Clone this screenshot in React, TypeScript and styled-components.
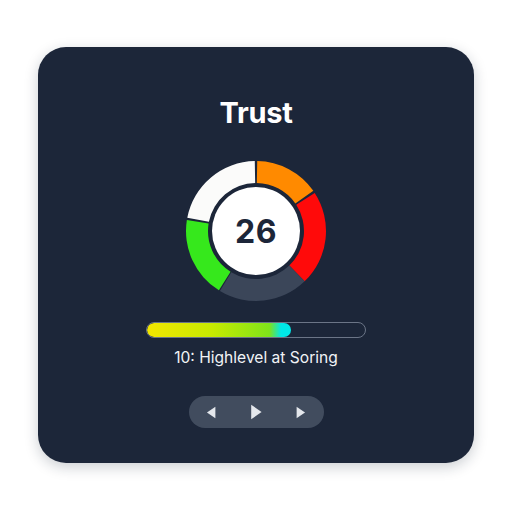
import React from "react";
import styled, { createGlobalStyle } from "styled-components";

const GlobalStyle = createGlobalStyle`
  body {
    margin: 0;
    background: #ffffff;
    font-family: Inter, "Noto Sans", sans-serif;
  }
`;

const Page = styled.div`
  display: flex;
  align-items: center;
  justify-content: center;
  width: 512px;
  height: 512px;
`;

const Card = styled.div`
  display: flex;
  flex-direction: column;
  align-items: center;
  width: 436px;
  height: 416px;
  box-sizing: border-box;
  padding-top: 48px;
  margin-top: -2px;
  border-radius: 28px;
  background: #1c2639;
  box-shadow: 0 4px 14px rgba(20, 30, 50, 0.22);
`;

const Title = styled.h1`
  margin: 0;
  font-size: 29px;
  line-height: 36px;
  font-weight: 700;
  color: #ffffff;
  letter-spacing: -0.3px;
`;

const Gauge = styled.div`
  display: grid;
  place-items: center;
  width: 142px;
  height: 142px;
  margin-top: 29px;

  & > * {
    grid-area: 1 / 1;
  }
`;

const Score = styled.span`
  font-size: 32px;
  font-weight: 700;
  color: #1c2639;
  letter-spacing: 0.5px;
`;

const Track = styled.div`
  width: 220px;
  height: 16px;
  margin-top: 20px;
  box-sizing: border-box;
  border: 1.5px solid #6b7587;
  border-radius: 8px;
  overflow: hidden;
`;

const Fill = styled.div`
  height: 100%;
  border-radius: 8px;
  background: linear-gradient(90deg, #f2e600 0%, #c8ea00 45%, #7fe31a 85%, #00e8e8 93%);
`;

const Caption = styled.p`
  margin: 11px 0 0;
  font-size: 15.6px;
  line-height: 18px;
  color: #f1f3f6;
`;

const Controls = styled.div`
  display: flex;
  align-items: center;
  justify-content: space-between;
  width: 135px;
  height: 32px;
  margin-top: 29px;
  padding: 0 14px;
  box-sizing: border-box;
  border-radius: 16px;
  background: #414c5e;
`;

const ControlButton = styled.button`
  display: flex;
  align-items: center;
  justify-content: center;
  width: 18px;
  height: 18px;
  padding: 0;
  border: none;
  background: transparent;
  cursor: pointer;
`;

const polar = (r: number, deg: number) => {
  const a = (deg * Math.PI) / 180;
  return [71 + r * Math.sin(a), 71 - r * Math.cos(a)];
};

const arc = (r0: number, r1: number, from: number, to: number) => {
  const [x0, y0] = polar(r1, from);
  const [x1, y1] = polar(r1, to);
  const [x2, y2] = polar(r0, to);
  const [x3, y3] = polar(r0, from);
  const large = to - from > 180 ? 1 : 0;
  return `M${x0} ${y0} A${r1} ${r1} 0 ${large} 1 ${x1} ${y1} L${x2} ${y2} A${r0} ${r0} 0 ${large} 0 ${x3} ${y3} Z`;
};

const segments = [
  { from: 1, to: 55, color: "#ff8a00" },
  { from: 57, to: 136, color: "#ff0a0a" },
  { from: 136, to: 211, color: "#3b4659" },
  { from: 212, to: 279, color: "#36e81c" },
  { from: 281, to: 359, color: "#fbfbfa" },
];

const Triangle = ({ dir, size }: { dir: "left" | "right"; size: number }) => (
  <svg width={size} height={size} viewBox="0 0 10 10">
    <path d={dir === "left" ? "M8 0.5 L8 9.5 L1.5 5 Z" : "M2 0.5 L2 9.5 L8.5 5 Z"} fill="#e4e7ec" />
  </svg>
);

const App = () => {
  const progress = 0.66;
  return (
    <>
      <GlobalStyle />
      <Page>
        <Card>
          <Title>Trust</Title>
          <Gauge>
            <svg width="142" height="142" viewBox="0 0 142 142">
              {segments.map((s) => (
                <path key={s.from} d={arc(48, 70, s.from, s.to)} fill={s.color} />
              ))}
              <circle cx="71" cy="71" r="44" fill="#ffffff" />
            </svg>
            <Score>26</Score>
          </Gauge>
          <Track>
            <Fill style={{ width: `${progress * 100}%` }} />
          </Track>
          <Caption>10: Highlevel at Soring</Caption>
          <Controls>
            <ControlButton aria-label="Previous">
              <Triangle dir="left" size={13} />
            </ControlButton>
            <ControlButton aria-label="Play">
              <Triangle dir="right" size={16} />
            </ControlButton>
            <ControlButton aria-label="Next">
              <Triangle dir="right" size={13} />
            </ControlButton>
          </Controls>
        </Card>
      </Page>
    </>
  );
};

export default App;
